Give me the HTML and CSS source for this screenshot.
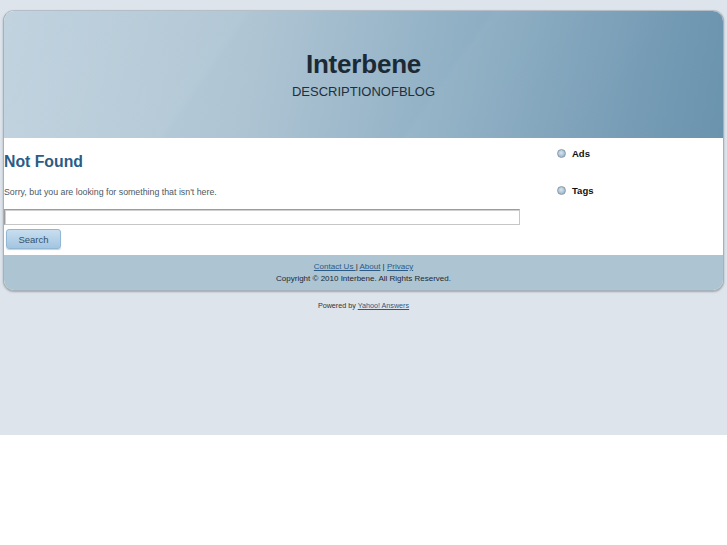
FILE: index.html
```html
<!DOCTYPE html>
<html>
<head>
<meta charset="utf-8">
<title>Interbene</title>
<link rel="stylesheet" href="styles.css">
</head>
<body>
<div class="page">
  <div class="wrap">
    <header class="header">
      <h1 class="title">Interbene</h1>
      <div class="desc">DESCRIPTIONOFBLOG</div>
    </header>
    <div class="body">
      <main class="main">
        <h2 class="heading">Not Found</h2>
        <p class="sorry">Sorry, but you are looking for something that isn't here.</p>
        <form class="search">
          <input class="field" type="text">
          <button class="btn" type="button">Search</button>
        </form>
      </main>
      <aside class="side">
        <div class="widget"><span class="dot"></span>Ads</div>
        <div class="widget"><span class="dot"></span>Tags</div>
      </aside>
    </div>
    <footer class="footer">
      <div class="links"><a href="#">Contact Us </a> | <a href="#">About</a> | <a href="#">Privacy </a></div>
      <div class="copy">Copyright © 2010 Interbene. All Rights Reserved.</div>
    </footer>
  </div>
  <div class="powered">Powered by <a href="#">Yahoo! Answers</a></div>
</div>
</body>
</html>
```
FILE: styles.css
```css
html, body { margin: 0; padding: 0; background: #fff; }
body { font-family: "Liberation Sans", Arial, sans-serif; }
.page {
  background: #dee4eb;
  height: 435px;
  box-sizing: border-box;
  padding-top: 10px;
}
.wrap {
  margin: 0 3px;
  border: 1px solid #a7b1ba;
  border-top-color: #b5bec6;
  border-radius: 11px;
  overflow: hidden;
  box-shadow: 0 1px 2px rgba(80,90,100,0.45);
  background: #fff;
  height: 279px;
  display: flex;
  flex-direction: column;
}
.header {
  height: 127px;
  box-sizing: border-box;
  padding-top: 38px;
  text-align: center;
  background:
    linear-gradient(125deg, rgba(255,255,255,0.0) 0%, rgba(255,255,255,0.035) 30%, rgba(255,255,255,0) 31%, rgba(255,255,255,0) 60%, rgba(255,255,255,0.03) 61%, rgba(255,255,255,0) 85%),
    linear-gradient(100deg, #c1d3df 0%, #aec4d3 35%, #90b0c5 62%, #6a93ae 100%);
}
.title {
  margin: 0;
  font-size: 26px;
  font-weight: bold;
  color: #1c2a36;
  line-height: 30px;
  letter-spacing: -0.2px;
}
.desc {
  margin-top: 5px;
  font-size: 13px;
  color: #1f2f3c;
  line-height: 16px;
}
.body {
  display: flex;
  height: 117px;
  background: #fff;
}
.main {
  width: 517px;
  padding-left: 0;
}
.heading {
  margin: 14px 0 0 0;
  font-size: 15.8px;
  font-weight: bold;
  color: #2b5c86;
  line-height: 20px;
}
.sorry {
  margin: 14px 0 0 0;
  font-size: 8.8px;
  color: #4b5966;
  line-height: 12px;
}
.search { margin-top: 11px; }
.field {
  display: block;
  box-sizing: border-box;
  width: 516px;
  height: 16px;
  margin: 0;
  border: 1px solid #9c9c9c;
  border-right-color: #c6c6c6;
  border-bottom-color: #c6c6c6;
  box-shadow: inset 1px 1px 0 #d0d0d0;
  background: #fff;
}
.btn {
  display: block;
  margin: 4px 0 0 2px;
  width: 55px;
  height: 20px;
  border: 1px solid #93b6d2;
  border-radius: 3px;
  background: linear-gradient(#c8deef, #a3c5e1);
  box-shadow: 0 1px 1px rgba(90,120,150,0.35);
  font-family: "Liberation Sans", Arial, sans-serif;
  font-size: 9.5px;
  color: #33506b;
  padding: 0;
}
.side {
  padding-left: 36px;
  padding-top: 9px;
}
.widget {
  display: flex;
  align-items: center;
  font-size: 9.5px;
  font-weight: bold;
  color: #111;
  height: 12px;
  margin-bottom: 25px;
}
.dot {
  width: 7px;
  height: 7px;
  border-radius: 50%;
  border: 1px solid #8a9aa8;
  background: radial-gradient(circle at 45% 40%, #d9e6f0 0%, #9fb9cd 70%);
  margin-right: 6px;
}
.footer {
  flex: 1;
  background: #adc4d2;
  text-align: center;
  font-size: 8px;
  color: #1e2a34;
  padding-top: 6px;
  line-height: 12px;
}
.footer a { color: #2a5a86; }
.powered {
  margin-top: 10px;
  text-align: center;
  font-size: 7.2px;
  color: #333;
  font-weight: normal;
}
.powered a { color: #2a5a86; }
```
